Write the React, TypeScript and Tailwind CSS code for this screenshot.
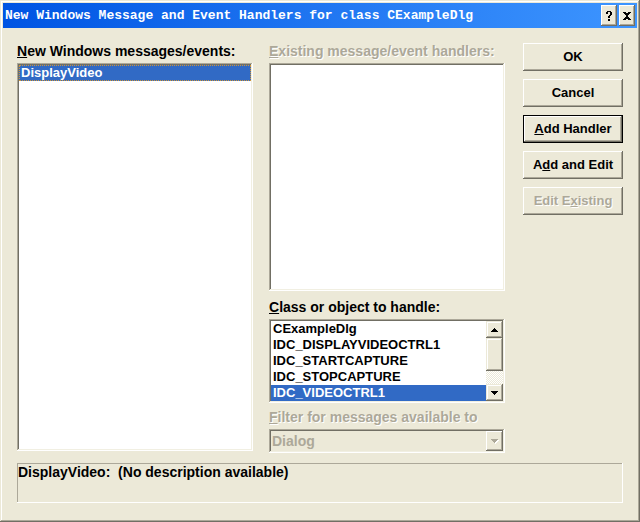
import type { ReactNode } from "react";

const sunken =
  "p-[2px] shadow-[inset_-1px_-1px_0_#fff,inset_1px_1px_0_#aca899,inset_-2px_-2px_0_#f1efe2,inset_2px_2px_0_#716f64]";
const raised =
  "bg-[#ece9d8] shadow-[inset_-1px_-1px_0_#716f64,inset_1px_1px_0_#fff,inset_-2px_-2px_0_#aca899]";
const scrollPart =
  "bg-[#ece9d8] shadow-[inset_-1px_-1px_0_#716f64,inset_1px_1px_0_#ece9d8,inset_-2px_-2px_0_#aca899,inset_2px_2px_0_#fff]";
const etched = "text-[#aca899] [text-shadow:1px_1px_0_#fff]";
const listBox =
  "block min-w-0 flex-1 appearance-none overflow-hidden rounded-none border-0 bg-white p-0 outline-none";
const optionRow =
  "block h-4 min-h-0 p-0 px-[2px] text-[13px] font-bold leading-4 text-black checked:bg-linear-to-r checked:from-[#316ac5] checked:to-[#316ac5] checked:[-webkit-text-fill-color:#fff]";

function Key({ children }: { children: ReactNode }) {
  return (
    <span className="underline decoration-1 underline-offset-1 [text-decoration-skip-ink:none]">
      {children}
    </span>
  );
}

function Label({
  htmlFor,
  disabled,
  children,
}: {
  htmlFor: string;
  disabled?: boolean;
  children: ReactNode;
}) {
  return (
    <label
      htmlFor={htmlFor}
      className={`block h-5 whitespace-nowrap leading-4 ${disabled ? etched : ""}`}
    >
      {children}
    </label>
  );
}

function PushButton({
  isDefault,
  disabled,
  children,
}: {
  isDefault?: boolean;
  disabled?: boolean;
  children: ReactNode;
}) {
  return (
    <button
      type="button"
      disabled={disabled}
      className={`h-7 w-full whitespace-nowrap text-[13px] leading-4 ${raised} ${
        isDefault ? "border border-black" : ""
      } ${disabled ? etched : ""}`}
    >
      {children}
    </button>
  );
}

function Arrow({ up, muted }: { up?: boolean; muted?: boolean }) {
  return (
    <svg
      width="7"
      height="4"
      viewBox="0 0 7 4"
      shapeRendering="crispEdges"
      aria-hidden="true"
      className="shrink-0 overflow-visible"
    >
      {muted && <path d="M1 1h7v1h-1v1h-1v1h-1v1h-1v-1h-1v-1h-1v-1h-1z" fill="#fff" />}
      <path
        d={
          up
            ? "M3 0h1v1h1v1h1v1h1v1H0V3h1V2h1V1h1z"
            : "M0 0h7v1H6v1H5v1H4v1H3V3H2V2H1V1H0z"
        }
        fill={muted ? "#aca899" : "#000"}
      />
    </svg>
  );
}

const classes = [
  "CExampleDlg",
  "IDC_DISPLAYVIDEOCTRL1",
  "IDC_STARTCAPTURE",
  "IDC_STOPCAPTURE",
  "IDC_VIDEOCTRL1",
];

export default function App() {
  return (
    <div className="flex min-h-screen flex-col bg-[#ece9d8] p-[3px] font-['Liberation_Sans',Arial,sans-serif] text-[14px] font-bold leading-4 text-black shadow-[inset_-1px_-1px_0_#716f64,inset_1px_1px_0_#ece9d8,inset_-2px_-2px_0_#aca899,inset_2px_2px_0_#fff]">
      <header className="flex h-[25px] items-center bg-linear-to-r from-[#0054e3] to-[#3d95ff] px-[2px]">
        <h1 className="min-w-0 flex-1 overflow-hidden whitespace-nowrap font-['Liberation_Mono','Courier_New',monospace] text-[13px] leading-4 text-white">
          New Windows Message and Event Handlers for class CExampleDlg
        </h1>
        <div className="flex gap-[2px]">
          <button
            type="button"
            aria-label="Help"
            className={`flex h-[21px] w-4 items-center justify-center ${raised}`}
          >
            <svg width="6" height="10" viewBox="0 0 6 10" shapeRendering="crispEdges" aria-hidden="true">
              <path d="M1 0h4v1h1v3h-1v1h-1v2h-2v-2h1v-1h1v-3h-2v2h-2v-2h1zM2 8h2v2h-2z" />
            </svg>
          </button>
          <button
            type="button"
            aria-label="Close"
            className={`flex h-[21px] w-4 items-center justify-center ${raised}`}
          >
            <svg width="8" height="8" viewBox="0 0 8 8" shapeRendering="crispEdges" aria-hidden="true">
              <path d="M0 0h3v1h2v-1h3v1h-1v1h-1v1h-1v2h1v1h1v1h1v1h-3v-1h-2v1h-3v-1h1v-1h1v-1h1v-2h-1v-1h-1v-1h-1z" />
            </svg>
          </button>
        </div>
      </header>

      <main className="flex flex-1 flex-col px-[14px] pt-[15px] pb-4">
        <div className="flex flex-1">
          <div className="grid min-w-0 flex-1 grid-cols-2 gap-4">
            <section className="flex min-w-0 flex-col pb-[2px]">
              <Label htmlFor="messages">
                <Key>N</Key>ew Windows messages/events:
              </Label>
              <div className={`flex flex-1 ${sunken}`}>
                <select id="messages" size={18} defaultValue="DisplayVideo" className={listBox}>
                  <option
                    value="DisplayVideo"
                    className={`${optionRow} outline-1 -outline-offset-1 outline-dotted outline-[#ce953a]`}
                  >
                    DisplayVideo
                  </option>
                </select>
              </div>
            </section>

            <section className="flex min-w-0 flex-col">
              <Label htmlFor="existing" disabled>
                <Key>E</Key>xisting message/event handlers:
              </Label>
              <div className={`flex flex-1 ${sunken}`}>
                <select id="existing" size={8} className={listBox} />
              </div>

              <div className="pt-2">
                <Label htmlFor="target">
                  <Key>C</Key>lass or object to handle:
                </Label>
              </div>
              <div className={`flex ${sunken}`}>
                <select
                  id="target"
                  size={5}
                  defaultValue="IDC_VIDEOCTRL1"
                  className={`${listBox} h-20`}
                >
                  {classes.map((name) => (
                    <option key={name} value={name} className={optionRow}>
                      {name}
                    </option>
                  ))}
                </select>
                <div className="flex h-20 w-[17px] flex-col bg-[repeating-conic-gradient(#fff_0_25%,#ece9d8_0_50%)] bg-[length:2px_2px]">
                  <button
                    type="button"
                    aria-label="Scroll up"
                    className={`flex h-[17px] items-center justify-center ${scrollPart}`}
                  >
                    <Arrow up />
                  </button>
                  <div className={`h-[33px] ${scrollPart}`} />
                  <button
                    type="button"
                    aria-label="Scroll down"
                    className={`mt-auto flex h-[17px] items-center justify-center ${scrollPart}`}
                  >
                    <Arrow />
                  </button>
                </div>
              </div>

              <div className="pt-[6px]">
                <Label htmlFor="filter" disabled>
                  <Key>F</Key>ilter for messages available to
                </Label>
              </div>
              <div className={`flex h-6 ${sunken}`}>
                <select
                  id="filter"
                  disabled
                  className="min-w-0 flex-1 appearance-none rounded-none border-0 bg-transparent p-0 pl-[1px] leading-4 text-[#aca899] opacity-100"
                >
                  <option>Dialog</option>
                </select>
                <span className={`flex w-[17px] items-center justify-center ${raised}`}>
                  <Arrow muted />
                </span>
              </div>
            </section>
          </div>

          <div className="ml-[18px] flex w-[100px] flex-col gap-2">
            <PushButton>OK</PushButton>
            <PushButton>Cancel</PushButton>
            <PushButton isDefault>
              <Key>A</Key>dd Handler
            </PushButton>
            <PushButton>
              A<Key>d</Key>d and Edit
            </PushButton>
            <PushButton disabled>
              Edit E<Key>x</Key>isting
            </PushButton>
          </div>
        </div>

        <p className="mt-[10px] h-10 whitespace-pre-wrap px-[1px] pt-[1px] shadow-[inset_-1px_-1px_0_#fff,inset_1px_1px_0_#aca899]">
          {"DisplayVideo:  (No description available)"}
        </p>
      </main>
    </div>
  );
}
